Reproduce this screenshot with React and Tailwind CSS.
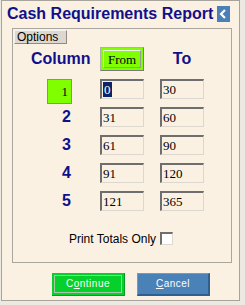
import React from 'react';

const navy = 'text-[#10108a]';

const Field = ({ value, selected }) => (
  <div
    className="w-[44px] h-[20px] bg-[#fbf1e3] border-t-2 border-l-2 border-b border-r border-t-[#6e6e6e] border-l-[#6e6e6e] border-b-[#dcd8d0] border-r-[#dcd8d0] flex items-center pl-[1px] text-[13px] leading-none text-black"
    style={{ fontFamily: "'Liberation Serif', serif" }}
  >
    {selected ? <span className="bg-[#0a246a] text-white px-[1px] py-[1px]">{value}</span> : value}
  </div>
);

export default function App() {
  const rows = [
    { n: '1', from: '0', to: '30' },
    { n: '2', from: '31', to: '60' },
    { n: '3', from: '61', to: '90' },
    { n: '4', from: '91', to: '120' },
    { n: '5', from: '121', to: '365' },
  ];

  return (
    <div className="w-[245px] h-[305px] bg-[#ece9e2] overflow-hidden" style={{ fontFamily: "'Liberation Sans', Arial, sans-serif" }}>
      <div className="ml-[1px] w-[239px] h-[301px] bg-[#fbf1e3] border border-[#a8a49c] flex flex-col">
        {/* title */}
        <div className="relative h-[27px] pl-[5px] pt-[1px]">
          <span className={`text-[16px] leading-[18px] font-bold ${navy} whitespace-nowrap`}>Cash Requirements Report</span>
          <div className="absolute left-[215px] top-[5px] w-[13px] h-[16px] bg-[#4a7fb8] flex items-center justify-center">
            <svg width="13" height="16" viewBox="0 0 13 16">
              <polyline points="8,4 4,8 8,12" fill="none" stroke="#fff" strokeWidth="2.2" />
            </svg>
          </div>
        </div>

        {/* options group */}
        <div className="ml-[10px] w-[220px] h-[235px] border border-[#aaa69e] flex flex-col">
          <div className="ml-[1px] mt-[1px] w-[53px] h-[14px] bg-[#ddd8cf] border-t border-l border-t-[#f4f2ee] border-l-[#f4f2ee] border-b border-r border-b-[#8e8a84] border-r-[#8e8a84] flex items-center pl-[2px] text-[12px] leading-none text-black">
            Options
          </div>

          {/* header */}
          <div className="mt-[3px] flex items-center h-[24px]">
            <div className={`w-[87px] pl-[18px] text-[16px] font-bold ${navy} leading-none`}>Column</div>
            <div className="w-[44px] h-[24px] bg-[#80ff00] border border-t-[#b0b0b0] border-l-[#b0b0b0] border-b-[#7a7a7a] border-r-[#7a7a7a] p-[2px]">
              <div className="w-full h-full border border-t-[#f0f0f0] border-l-[#f0f0f0] border-b-[#9a9a9a] border-r-[#9a9a9a] flex items-center justify-center text-[13px] leading-none text-black" style={{ fontFamily: "'Liberation Serif', serif" }}>
                From
              </div>
            </div>
            <div className={`ml-[16px] w-[44px] text-center text-[16px] font-bold ${navy} leading-none`}>To</div>
          </div>

          {/* rows */}
          <div className="mt-[8px] flex flex-col">
            {rows.map((r, i) => (
              <div key={r.n} className="h-[28px] flex items-start">
                <div className="w-[87px] pr-[28px] flex justify-end">
                  {i === 0 ? (
                    <div className="w-[25px] h-[25px] bg-[#80ff00] border border-[#5cc000] flex items-center justify-end pr-[3px] text-[13px] leading-none text-black" style={{ fontFamily: "'Liberation Serif', serif" }}>
                      1
                    </div>
                  ) : (
                    <span className={`text-[16px] leading-[20px] font-bold ${navy} pr-[1px]`}>{r.n}</span>
                  )}
                </div>
                <Field value={r.from} selected={i === 0} />
                <div className="ml-[16px]">
                  <Field value={r.to} />
                </div>
              </div>
            ))}
          </div>

          {/* print totals */}
          <div className="mt-[13px] flex items-center justify-center gap-[4px] pr-[2px]">
            <span className="text-[12px] leading-none text-black">Print Totals Only</span>
            <div className="w-[13px] h-[13px] bg-white border-t-2 border-l-2 border-b border-r border-t-[#6e6e6e] border-l-[#6e6e6e] border-b-[#dcd8d0] border-r-[#dcd8d0]" />
          </div>
        </div>

        {/* buttons */}
        <div className="mt-[10px] ml-[50px] flex gap-[12px]">
          <button className="w-[73px] h-[23px] bg-[#06d02c] border-b border-r border-b-[#00a020] border-r-[#00a020] shadow-[inset_0_0_0_2px_#06d02c,inset_0_0_0_3px_#a9c8a9] text-white text-[10px] tracking-[0.5px] leading-none flex items-center justify-center">
            C<u>o</u>ntinue
          </button>
          <button className="w-[73px] h-[23px] bg-[#4a82b8] border-t border-l border-t-[#6c9ccc] border-l-[#6c9ccc] border-b-2 border-r-2 border-b-[#2f5f8f] border-r-[#2f5f8f] text-white text-[10px] tracking-[0.5px] leading-none flex items-center justify-center">
            <u>C</u>ancel
          </button>
        </div>
      </div>
    </div>
  );
}
